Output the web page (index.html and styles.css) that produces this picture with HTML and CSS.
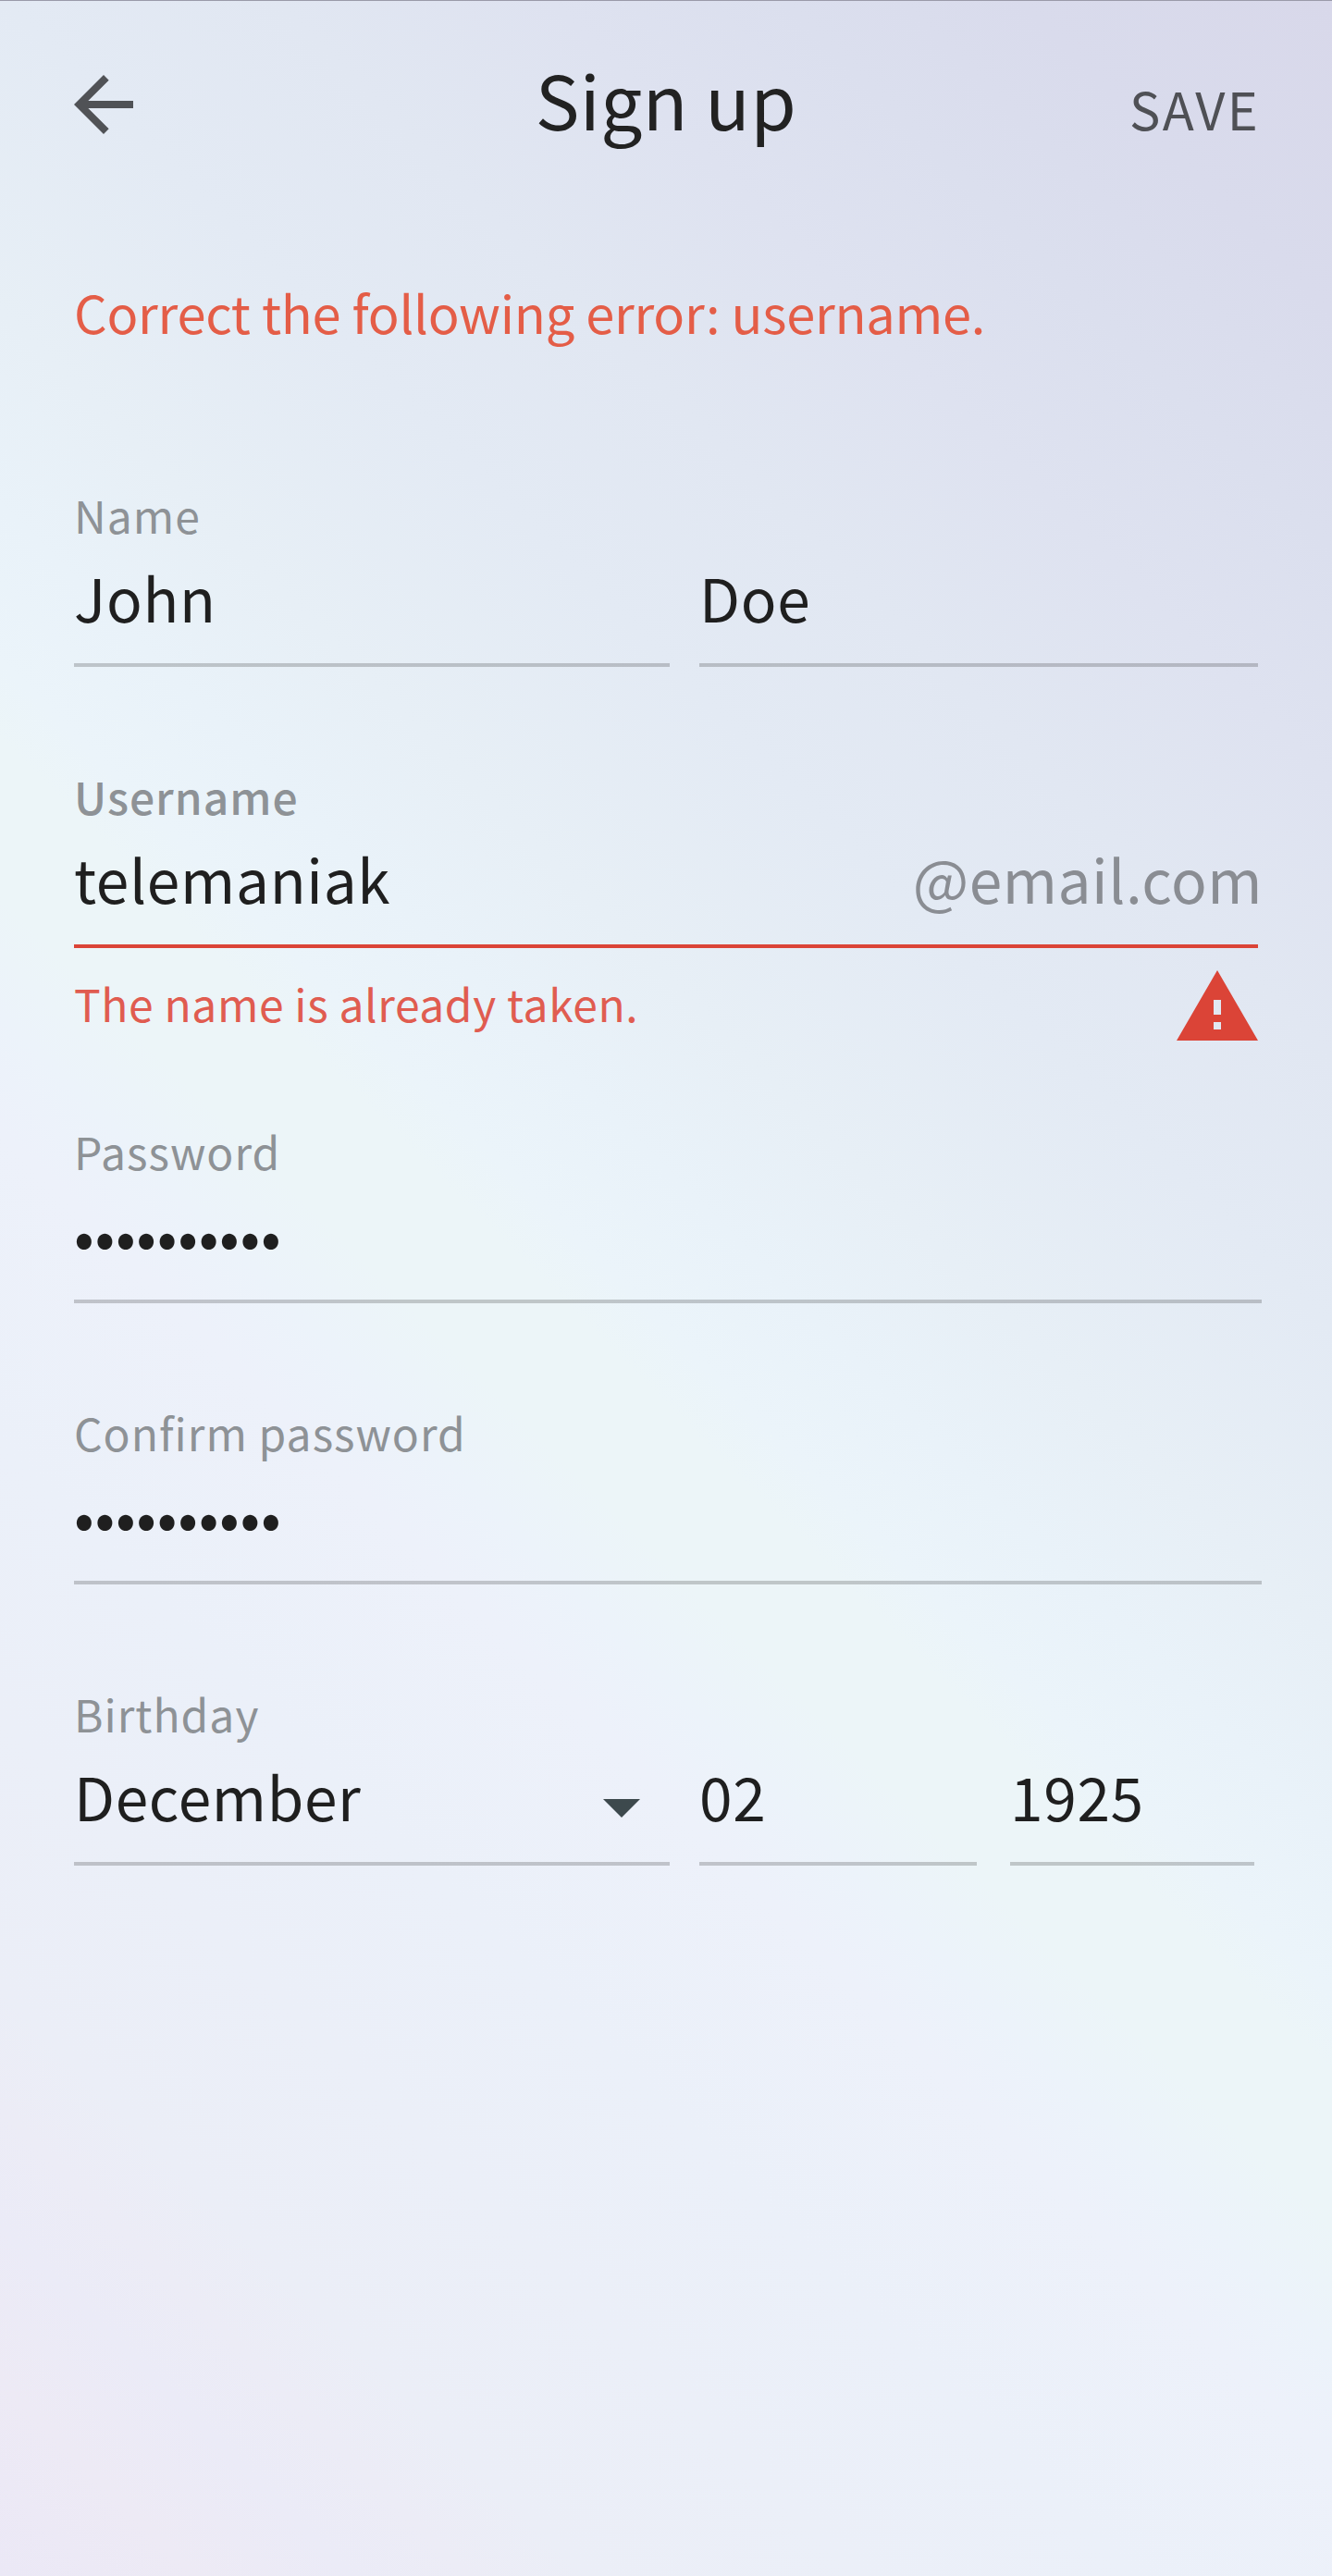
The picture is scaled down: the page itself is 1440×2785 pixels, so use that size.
FILE: index.html
```html
<!DOCTYPE html>
<html lang="en">
<head>
<meta charset="utf-8">
<title>Sign up</title>
<link rel="stylesheet" href="styles.css">
</head>
<body>
<main class="screen">
  <header class="bar">
    <svg class="back" viewBox="0 0 24 24" aria-label="Back"><path d="M20 11H7.83l5.59-5.59L12 4l-8 8 8 8 1.41-1.41L7.83 13H20z"/></svg>
    <h1 class="title">Sign up</h1>
    <span class="save">SAVE</span>
  </header>
  <p class="summary">Correct the following error: username.</p>
  <form class="form">
    <section class="group">
      <div class="label">Name</div>
      <div class="row name-row">
        <div class="field">John</div>
        <div class="field">Doe</div>
      </div>
    </section>
    <section class="group group-error">
      <div class="label label-active">Username</div>
      <div class="row">
        <div class="field field-error"><span>telemaniak</span><span class="domain">@email.com</span></div>
      </div>
      <div class="hint">
        <span>The name is already taken.</span>
        <svg class="warning" viewBox="1 2 22 19"><path d="M1 21h22L12 2zM13 18h-2v-2h2zM13 14h-2v-4h2z" fill-rule="evenodd"/></svg>
      </div>
    </section>
    <section class="group">
      <div class="label">Password</div>
      <div class="row"><div class="field">••••••••••</div></div>
    </section>
    <section class="group">
      <div class="label">Confirm password</div>
      <div class="row"><div class="field">••••••••••</div></div>
    </section>
    <section class="group">
      <div class="label">Birthday</div>
      <div class="row date-row">
        <div class="field"><span>December</span><svg class="caret" viewBox="0 0 10 5"><path d="M0 0l5 5 5-5z"/></svg></div>
        <div class="field">02</div>
        <div class="field year">1925</div>
      </div>
    </section>
  </form>
</main>
</body>
</html>
```
FILE: styles.css
```css
* { box-sizing: border-box; }
body {
  margin: 0;
  font-family: "Noto Sans CJK JP", "Noto Sans CJK SC", sans-serif;
  color: #1f1f1f;
}
.screen {
  height: 2785px;
  padding: 0 76px 0 80px;
  border-top: 1px solid #9a9aa9;
  background: linear-gradient(225deg,
    #d8d8ea 0%, #d9dbec 8%, #dbdfee 14%, #dee2f0 20%, #e1e7f2 27%,
    #e3eaf4 34%, #e7eff6 42%, #e9f2f9 47%, #ebf4fa 51%,
    #ecf5f8 53%, #ecf5f8 57%, #ecf3fa 60%, #edf1fa 63%,
    #ebf0f9 71%, #ebeff8 78%, #ebeef7 85%, #ececf6 88%,
    #ebebf7 91%, #edeaf5 95%, #ebe8f6 100%);
}
.bar {
  display: grid;
  grid-template-columns: 1fr auto 1fr;
  height: 224px;
  padding-right: 4px;
}
.back { width: 96px; height: 96px; margin: 64px 0 0 -16px; fill: #505256; }
.title { margin: 45px 0 0; font-size: 80px; line-height: 120px; font-weight: 400; letter-spacing: .4px; color: #222; }
.save { margin: 76px -2px 0 0; justify-self: end; font-size: 56px; line-height: 80px; letter-spacing: 2.3px; color: #4f5055; }
.summary { margin: 72px 0 0; font-size: 56px; line-height: 80px; letter-spacing: -.28px; color: #e45d47; white-space: nowrap; }
.form { margin-top: 143px; }
.group { height: 304px; }
.group-error { height: 384px; }
.label { height: 72px; font-size: 48px; line-height: 72px; letter-spacing: 1px; color: #8e9296; white-space: nowrap; }
.label-active { font-weight: 500; }
.row { display: grid; }
.name-row { grid-template-columns: 644px 604px; column-gap: 32px; }
.date-row { grid-template-columns: 644px 300px 264px; column-gap: 32px; }
.year { margin-left: 4px; width: 264px; }
.field {
  display: flex;
  align-items: flex-start;
  justify-content: space-between;
  height: 129px;
  border-bottom: 4px solid rgba(30, 30, 30, .22);
  font-size: 64px;
  line-height: 106px;
  letter-spacing: .68px;
  white-space: nowrap;
}
.field-error { width: 1280px; border-color: #db4437; }
.domain { color: #8a8d93; margin-right: -5px; letter-spacing: .5px; }
.hint { display: flex; justify-content: space-between; width: 1280px; padding-top: 24px; font-size: 48px; line-height: 70px; letter-spacing: .56px; color: #e05c50; }
.warning { width: 88px; height: 76px; fill: #db4437; }
.caret { width: 40px; height: 20px; margin: 57px 32px 0 0; fill: #3d494d; }
```
